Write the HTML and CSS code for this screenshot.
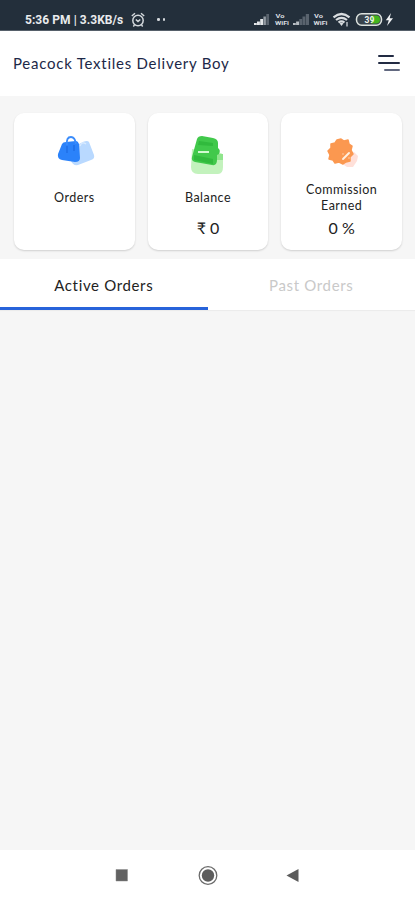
FILE: index.html
```html
<!DOCTYPE html>
<html lang="en">
<head>
<meta charset="utf-8">
<title>Peacock Textiles Delivery Boy</title>
<link rel="stylesheet" href="styles.css">
</head>
<body>
<div class="status">
  <span class="clock">5:36 PM | 3.3KB/s</span>
  <svg class="alarm" width="14" height="16" viewBox="0 0 14 16" fill="none" stroke="#d3d8dc" stroke-width="1.5"><circle cx="7" cy="8.5" r="5.2"/><path d="M.8 4 4 1.3M13.2 4 10 1.3M4.8 7.5 7 9.4l2.3-1.9M3.5 13l-1.2 1.4M10.5 13l1.2 1.4"/></svg>
  <span class="dots"><i></i><i></i></span>
  <svg class="signals" width="145" height="18" viewBox="252 11 145 18">
    <g fill="#e3e6e9"><path d="M254 25v-2h2.800v2zM257 25v-3.500h2.900v3.500zM260.200 25v-6h2.900v6z"/><path fill="#929aa2" d="M263.400 25v-8.500h2.500v8.500z"/><path fill="#59636e" d="M266.300 25V14h2.700v11z"/></g>
    <g><path fill="#b7bdc3" d="M293 25v-2h2.800v2zM296.100 25v-3.500h2.900v3.500z"/><path fill="#59636e" d="M299.300 25v-6h2.800v6zM302.500 25v-8.500h2.800v8.500zM305.800 25V14h3.200v11z"/></g>
    <g class="vowifi"><text x="275.500" y="18.200" textLength="9" lengthAdjust="spacingAndGlyphs">Vo</text><text x="275" y="25.400" textLength="14" lengthAdjust="spacingAndGlyphs">WiFi</text><text x="314" y="18.200" textLength="9" lengthAdjust="spacingAndGlyphs">Vo</text><text x="313.500" y="25.400" textLength="14" lengthAdjust="spacingAndGlyphs">WiFi</text></g>
    <g fill="none" stroke="#d9dde0" stroke-width="2.200"><path d="M333.500 17.300q8-6.600 16 0M336 20q5.500-4.400 11 0M338.500 22.500q3-2.300 6 0"/></g>
    <path fill="#d9dde0" d="m339.500 23.300 2 2.700 2-2.700q-2-1.300-4 0z"/><path fill="#929aa2" d="M346 22h2v4.500h-2z"/>
    <rect x="356.500" y="13.800" width="25" height="11.400" rx="5.200" fill="#38434c" stroke="#dce2de" stroke-width="1.500"/>
    <path fill="#42b51e" d="M371 15.500h5q4 0 4 4t-4 4h-5z"/>
    <text class="charge" x="364.500" y="22.800">39</text>
    <path fill="#f0f2f4" d="m391 13-5.200 7.200h3L387 26l6-7.700h-3.300z"/>
  </svg>
</div>
<header class="bar">
  <h1>Peacock Textiles Delivery Boy</h1>
  <div class="menu"><i></i><i></i><i></i></div>
</header>
<main>
  <section class="cards">
    <div class="card">
      <svg width="46" height="46" viewBox="0 0 46 46"><path fill="#b9d9ff" d="M25 13q8-5 10-2l5 13q1 4-3 5l-13 5q-5 1-7-4z"/><path fill="none" stroke="#dcecff" stroke-width="1.300" d="M26 15q2-5 6-2"/><path fill="#2b82fa" d="M8 13q1-2 4-2l10-1q2 0 3 3l1 14q0 4-5 4L8 29q-5-1-4-6z"/><path fill="none" stroke="#3a8cfb" stroke-width="1.800" d="M13 14q-1-8 4-8 4 0 5 7"/><path stroke="#1965dd" d="M13 15v7M20 14v6"/></svg>
      <p class="label">Orders</p>
    </div>
    <div class="card">
      <svg class="wallet" width="46" height="46" viewBox="0 0 46 46"><path fill="#c3f2bd" d="M7 18l28 4q3 0 3 4v10q0 7-5 7H13q-7 0-7-7z"/><path fill="#90e58d" d="M31 23h7v6h-8z"/><path fill="#41c94b" d="M12 8q1-3 5-3l11 2q5 1 5 5v5q3 2 1 6l-2 1v5q0 6-5 5L10 31q-4-1-3-5z"/><path fill="#31ba3d" d="M14 10l14 2v3l-15-1zM9 24l19 4v5L9 29z"/><path stroke="#e2ffe0" stroke-width="1.800" d="M13 21h11"/></svg>
      <p class="label">Balance</p>
      <p class="value">₹ 0</p>
    </div>
    <div class="card">
      <svg class="badge" width="46" height="46" viewBox="0 0 46 46"><path fill="#ffe0d9" d="M21 26l12-5 4 4-1 5-4 6-6 0-6-4z"/><path fill="#fb9850" stroke="#fb9850" stroke-width="1.500" stroke-linejoin="round" d="m20 8 3 2 4-1 1 4 3 2-1 4 2 4-3 3v4l-4 1-3 2-4-2-4 1-2-3-4-1 1-4-2-4 3-3v-4l4-1 2-3z"/><path stroke="#fff0df" stroke-width="1.900" stroke-linecap="round" d="m22 28 6-6"/><circle cx="22" cy="23" r=".8" fill="#ffd2a9"/><circle cx="28" cy="27" r=".8" fill="#ffd2a9"/></svg>
      <p class="label">Commission<br>Earned</p>
      <p class="value">0 %</p>
    </div>
  </section>
  <nav class="tabs"><div class="tab active"><span>Active Orders</span></div><div class="tab past"><span>Past Orders</span></div></nav>
</main>
<footer class="nav">
  <svg width="190" height="22" viewBox="113 864 190 22"><path fill="#626262" stroke="#8a8a8a" stroke-width=".5" d="M116 869.500h11.500V881H116z"/><circle cx="208" cy="875.500" r="8.800" fill="none" stroke="#6b6b6b" stroke-width="1.300"/><circle cx="208" cy="875.500" r="6.200" fill="#5c5c5c"/><path fill="#5c5c5c" d="M298.500 869v13L286.500 875.500z"/></svg>
</footer>
</body>
</html>
```
FILE: styles.css
```css
* { box-sizing: border-box; }
body { margin: 0; height: 900px; display: flex; flex-direction: column; background: #f6f6f6; font-family: Lato, "Noto Sans", sans-serif; overflow: hidden; }
h1, p { margin: 0; font-weight: 400; }
.status { height: 31px; flex: none; display: flex; align-items: flex-start; padding: 11px 18px 0 25px; background: #232f3b; border-bottom: 1px solid #56606a; color: #e9ebed; }
.clock { font: 700 12px/18px Roboto, sans-serif; width: 104px; white-space: nowrap; letter-spacing: .05px; }
.alarm { margin: 1px 0 0 2px; }
.dots { display: flex; gap: 3px; margin: 7px 0 0 12px; }
.dots i { width: 2.5px; height: 2.5px; background: #d5d9dd; border-radius: 50%; }
.signals { margin-left: auto; }
.vowifi { font: 700 6px Roboto, sans-serif; fill: #d9dde0; }
.charge { font: 700 8.5px Roboto, sans-serif; fill: #eef3ee; }
.bar { height: 65px; flex: none; display: flex; align-items: center; justify-content: space-between; padding: 0 15px 2px 13px; background: #fff; }
.bar h1 { font-size: 15px; line-height: 20px; letter-spacing: .75px; color: #1c2848; white-space: nowrap; }
.menu { width: 22px; display: flex; flex-direction: column; gap: 5px; }
.menu i { height: 2px; background: #222b43; border-radius: 1px; }
.menu i:first-child { width: 16px; }
.menu i:last-child { width: 16px; align-self: flex-end; background: #626980; }
main { flex: 1; }
.cards { height: 163px; display: grid; grid-template-columns: repeat(3, 1fr); gap: 13px; padding: 17px 13px 8px 14px; }
.card { height: 137px; background: #fff; border-radius: 10px; box-shadow: 0 1px 2px rgba(0, 0, 0, .16); display: flex; flex-direction: column; align-items: center; padding-top: 18px; color: #222; text-align: center; }
.card svg { flex: none; margin-left: 5px; }
.card .badge { margin-left: 4px; }
.card .wallet { margin-left: 1px; }
.label { height: 32px; margin-top: 5px; font-size: 12.5px; line-height: 16px; letter-spacing: .45px; display: flex; align-items: center; }
.value { margin-top: 4px; font-size: 16px; line-height: 20px; }
.tabs { height: 51px; display: flex; background: #fff; box-shadow: 0 1px 1px rgba(0, 0, 0, .04); }
.tab { width: 50%; display: flex; align-items: center; justify-content: center; font-size: 15px; letter-spacing: .65px; border-bottom: 3px solid transparent; color: #222; padding-top: 4px; }
.active { border-color: #2763da; }
.past { color: #c9c9c9; }
.nav { height: 50px; flex: none; background: #fff; display: flex; align-items: center; justify-content: center; }
```
